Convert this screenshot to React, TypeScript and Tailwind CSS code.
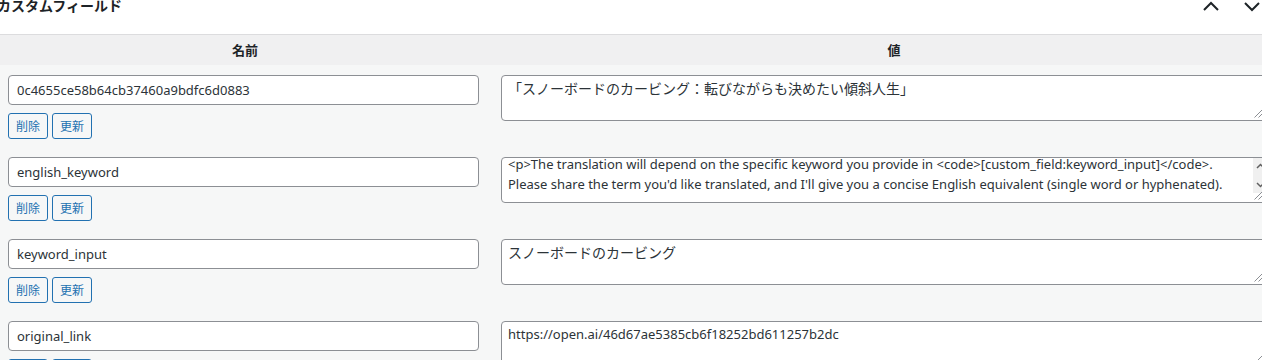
import { useEffect, useRef } from "react";

type Field = {
  name: string;
  value: string;
  cjk?: boolean;
  scroll?: number;
};

const FIELDS: Field[] = [
  {
    name: "0c4655ce58b64cb37460a9bdfc6d0883",
    value: "「スノーボードのカービング：転びながらも決めたい傾斜人生」",
    cjk: true,
  },
  {
    name: "english_keyword",
    value:
      "<p>The translation will depend on the specific keyword you provide in <code>[custom_field:keyword_input]</code>.\nPlease share the term you'd like translated, and I'll give you a concise English equivalent (single word or hyphenated).\n\n",
    scroll: 6,
  },
  { name: "keyword_input", value: "スノーボードのカービング", cjk: true },
  { name: "original_link", value: "https://open.ai/46d67ae5385cb6f18252bd611257b2dc" },
];

const LATIN = "font-['Noto_Sans','Noto_Sans_CJK_JP',sans-serif] text-[13px]";
const CJK = "font-['Noto_Sans_CJK_JP','Noto_Sans',sans-serif] text-[14px]";

// textarea corner resize grip
function Grip() {
  return (
    <svg
      className="absolute bottom-[3px] left-[753px]"
      width="9"
      height="8"
      viewBox="0 0 9 8"
      fill="none"
      stroke="#8c8f94"
      strokeWidth="1"
    >
      <line x1="0.5" y1="7.5" x2="8.5" y2="-0.5" />
      <line x1="4.5" y1="7.5" x2="8.5" y2="3.5" />
    </svg>
  );
}

// classic scrollbar strip, only for the overflowing textarea
function ScrollStrip() {
  return (
    <div className="absolute left-[752px] top-[1px] flex h-[35px] w-[15px] flex-col items-center justify-between bg-[#f0f0f0] py-[5px]">
      <svg width="9" height="6" viewBox="0 0 9 6" fill="none" stroke="#606060" strokeWidth="1.5">
        <polyline points="1,5 4.5,1.5 8,5" />
      </svg>
      <svg width="9" height="6" viewBox="0 0 9 6" fill="none" stroke="#606060" strokeWidth="1.5">
        <polyline points="1,1 4.5,4.5 8,1" />
      </svg>
    </div>
  );
}

function FieldRow({ field }: { field: Field }) {
  const ref = useRef<HTMLTextAreaElement>(null);

  useEffect(() => {
    if (ref.current && field.scroll) ref.current.scrollTop = field.scroll;
  }, [field.scroll]);

  return (
    <div className="flex pt-[10px] pb-[8px]">
      <div className="w-[490px] shrink-0 pl-[8px]">
        <input
          readOnly
          value={field.name}
          className={`block h-[30px] w-[471px] rounded-[4px] border border-[#8c8f94] bg-white px-[8px] text-[#2c3338] outline-none ${LATIN}`}
        />
        <div className="mt-[8px] flex gap-[4px]">
          {["削除", "更新"].map((label) => (
            <button
              key={label}
              className="flex h-[26px] w-[40px] items-center justify-center rounded-[3px] border border-[#2271b1] bg-[#f6f7f7] font-['Noto_Sans_CJK_JP',sans-serif] text-[12px] text-[#2271b1]"
            >
              {label}
            </button>
          ))}
        </div>
      </div>
      <div className="pl-[11px]">
        <div className="relative w-[769px]">
          <textarea
            ref={ref}
            readOnly
            value={field.value}
            wrap="off"
            className={`block h-[46px] w-[769px] resize-none overflow-hidden rounded-[4px] border border-[#8c8f94] bg-white px-[6px] py-[2px] leading-[20px] whitespace-pre text-[#2c3338] outline-none ${
              field.cjk ? CJK : LATIN
            }`}
          />
          {field.scroll ? <ScrollStrip /> : null}
          <Grip />
        </div>
      </div>
    </div>
  );
}

export default function App() {
  return (
    <div className="h-[360px] w-[1262px] overflow-hidden bg-white text-[#1d2327]">
      <div className="flex h-[34px] items-start">
        <h2 className="-ml-[3px] -mt-[2px] font-['Noto_Sans_CJK_JP',sans-serif] text-[14px] leading-[14px] font-semibold">
          カスタムフィールド
        </h2>
        <div className="ml-auto mr-[2px] mt-[1px] flex gap-[25px]">
          <svg width="16" height="11" viewBox="0 0 16 11" fill="none" stroke="#1d2327" strokeWidth="2">
            <polyline points="1,9 8,2 15,9" />
          </svg>
          <svg width="16" height="11" viewBox="0 0 16 11" fill="none" stroke="#1d2327" strokeWidth="2">
            <polyline points="1,2 8,9 15,2" />
          </svg>
        </div>
      </div>

      <div className="w-[1298px] border-t border-[#dcdcde] bg-[#f6f7f7]">
        <div className="flex h-[30px] items-center bg-[#f0f0f1] font-['Noto_Sans_CJK_JP',sans-serif] text-[13px] font-semibold">
          <div className="w-[490px] text-center">名前</div>
          <div className="flex-1 text-center">値</div>
        </div>
        {FIELDS.map((field) => (
          <FieldRow key={field.name} field={field} />
        ))}
      </div>
    </div>
  );
}
